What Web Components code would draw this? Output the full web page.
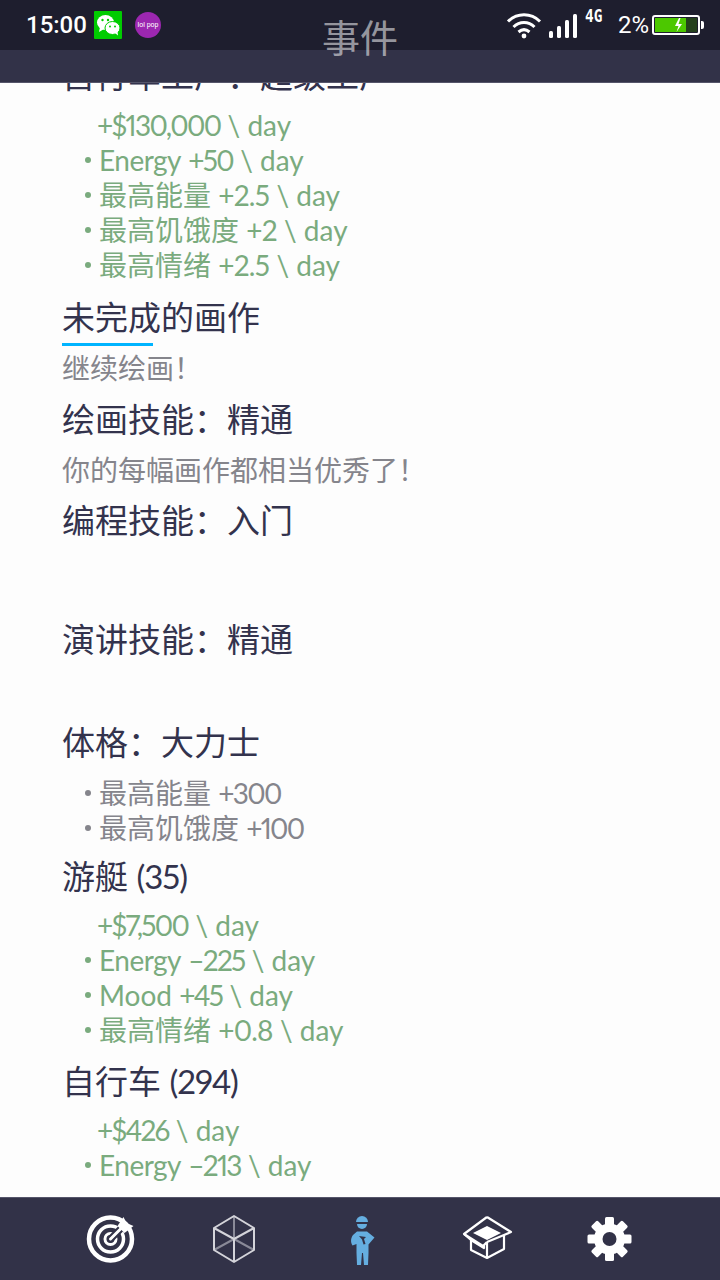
<!DOCTYPE html>
<html>
<head>
<meta charset="utf-8">
<title>事件</title>
<style>
    html, body { margin: 0; height: 100%; }
    body {
        font-family: "Lato", "Noto Sans CJK SC", sans-serif;
        background: #fdfdfd;
        overflow: hidden;
    }
    /* Lato's digits run wider than the game's font */
    .n { letter-spacing: -1.7px; }
    .d { letter-spacing: -.7px; }
    .t { letter-spacing: -1px; }
    .e { letter-spacing: -.5px; }
</style>
</head>
<body>
<game-screen>
    <status-bar></status-bar>
    <title-bar>事件</title-bar>
    <event-list>
        <ev-title style="margin-bottom: 12.5px">自行车工厂：超级工厂</ev-title>
        <ev-stats>
            <ev-stat plain><span class="n">+$130,000</span> \ day</ev-stat>
            <ev-stat><span class="e">Energy</span> <span class="n">+50</span> \ day</ev-stat>
            <ev-stat>最高能量 <span class="d">+2.5</span> \ day</ev-stat>
            <ev-stat>最高饥饿度 <span class="d">+2</span> \ day</ev-stat>
            <ev-stat>最高情绪 <span class="d">+2.5</span> \ day</ev-stat>
        </ev-stats>
        <ev-title underlined style="margin-top: 14.5px">未完成的画作</ev-title>
        <ev-note style="margin-top: 2px">继续绘画！</ev-note>
        <ev-title style="margin-top: 11px">绘画技能：精通</ev-title>
        <ev-note style="margin-top: 11px">你的每幅画作都相当优秀了！</ev-note>
        <ev-title style="margin-top: 10px">编程技能：入门</ev-title>
        <ev-title style="margin-top: 79px">演讲技能：精通</ev-title>
        <ev-title style="margin-top: 63px">体格：大力士</ev-title>
        <ev-stats muted style="margin-top: 13.5px">
            <ev-stat>最高能量 <span class="n">+300</span></ev-stat>
            <ev-stat>最高饥饿度 <span class="n">+100</span></ev-stat>
        </ev-stats>
        <ev-title style="margin-top: 10.5px">游艇 <span class="t">(35)</span></ev-title>
        <ev-stats style="margin-top: 11.5px">
            <ev-stat plain><span class="n">+$7,500</span> \ day</ev-stat>
            <ev-stat><span class="e">Energy</span> <span class="n">–225</span> \ day</ev-stat>
            <ev-stat>Mood <span class="n">+45</span> \ day</ev-stat>
            <ev-stat>最高情绪 <span class="d">+0.8</span> \ day</ev-stat>
        </ev-stats>
        <ev-title style="margin-top: 13.5px">自行车 <span class="t">(294)</span></ev-title>
        <ev-stats style="margin-top: 11.5px">
            <ev-stat plain><span class="n">+$426</span> \ day</ev-stat>
            <ev-stat><span class="e">Energy</span> <span class="n">–213</span> \ day</ev-stat>
        </ev-stats>
    </event-list>
    <nav-bar></nav-bar>
</game-screen>

<script>
class GameScreen extends HTMLElement {
    constructor() {
        super();
        this.attachShadow({ mode: 'open' });
        this.shadowRoot.innerHTML = `
            <style>
                :host {
                    display: flex;
                    flex-direction: column;
                    width: 720px;
                    height: 1280px;
                    position: relative;
                }
            </style>
            <slot></slot>
        `;
    }
}

class StatusBar extends HTMLElement {
    constructor() {
        super();
        this.attachShadow({ mode: 'open' });
        this.shadowRoot.innerHTML = `
            <style>
                :host {
                    display: flex;
                    align-items: center;
                    flex: none;
                    height: 50px;
                    background: #1e1e2e;
                    color: #fff;
                    font-family: "Roboto", sans-serif;
                    padding-left: 27px;
                    box-sizing: border-box;
                }
                .time { font-size: 24px; font-weight: 500; width: 67px; margin-left: -1px; margin-right: 1px; }
                .wechat {
                    width: 28px;
                    height: 28px;
                    background: #00cc00;
                    border-radius: 1px;
                    display: block;
                }
                .lolli {
                    width: 26px;
                    height: 26px;
                    margin-left: 13px;
                    border-radius: 50%;
                    background: #9c27b0;
                    font-size: 7px;
                    line-height: 26px;
                    text-align: center;
                    white-space: nowrap;
                }
                .right { margin-left: auto; display: flex; align-items: center; }
                .right svg { display: block; }
                .net {
                    font: bold 17px/16px "DejaVu Sans Mono", monospace;
                    width: 20px;
                    margin: -18px 0 0 7px;
                    transform: scaleX(.85);
                    transform-origin: left;
                }
                .pct { font-size: 24px; margin-left: 13px; width: 34px; }
            </style>
            <span class="time">15:00</span>
            <svg class="wechat" viewBox="0 0 28 28">
                <ellipse cx="11.5" cy="11.5" rx="8.5" ry="7.5" fill="#fff"/>
                <path d="M6 16l-1 5 5-3z" fill="#fff"/>
                <ellipse cx="18.5" cy="17" rx="7.5" ry="6.5" fill="#fff" stroke="#00cc00"/>
                <path d="M21 22l3 2.5-.5-4z" fill="#fff"/>
                <circle cx="8.5" cy="9" r="1.2" fill="#00cc00"/>
                <circle cx="14" cy="9" r="1.2" fill="#00cc00"/>
                <circle cx="16" cy="15.5" r="1" fill="#00cc00"/>
                <circle cx="21" cy="15.5" r="1" fill="#00cc00"/>
            </svg>
            <span class="lolli">lol pop</span>
            <span class="right">
                <svg width="36" height="30" viewBox="0 0 36 30" fill="none" stroke="#fff" stroke-width="3">
                    <path d="M2 11.5C11 2.5 25 2.5 34 11.5"/>
                    <path d="M7.5 17C13.5 11 22.5 11 28.5 17"/>
                    <path d="M12.5 22C16 19 20 19 23.5 22"/>
                    <circle cx="18" cy="26" r="2.4" fill="#fff" stroke="none"/>
                </svg>
                <svg width="30" height="26" viewBox="0 0 30 26" fill="#fff" style="margin: 1px 0 0 6px">
                    <rect x="1" y="18" width="4" height="7" rx="1.5"/>
                    <rect x="9" y="13" width="4" height="12" rx="1.5"/>
                    <rect x="17" y="7" width="4" height="18" rx="1.5"/>
                    <rect x="25" y="1" width="4" height="24" rx="1.5"/>
                </svg>
                <span class="net">4G</span>
                <span class="pct">2%</span>
                <svg width="53" height="22" viewBox="0 0 53 22" style="margin-right: 15px">
                    <rect x="1" y="2" width="46" height="18" rx="2" fill="none" stroke="#fff" stroke-width="2"/>
                    <rect x="3" y="4" width="31" height="14" fill="#4cc800"/>
                    <rect x="34" y="4" width="11" height="14" fill="#24401c"/>
                    <path d="M27 4l-4 8h3.500l-2 6 5.500-8h-3.500l2-6z" fill="#fff"/>
                    <path d="M49 7h1a2 2 0 0 1 2 2v4a2 2 0 0 1-2 2h-1z" fill="#fff"/>
                </svg>
            </span>
        `;
    }
}

class TitleBar extends HTMLElement {
    constructor() {
        super();
        this.attachShadow({ mode: 'open' });
        this.shadowRoot.innerHTML = `
            <style>
                :host {
                    display: block;
                    flex: none;
                    height: 33px;
                    background: #323248;
                    border-bottom: 1px solid #55556a;
                    box-sizing: border-box;
                    position: relative;
                    z-index: 2;
                }
                .label {
                    position: absolute;
                    left: 0;
                    right: 0;
                    top: -40px;
                    height: 52px;
                    line-height: 52px;
                    text-align: center;
                    font-family: "Noto Sans CJK SC", sans-serif;
                    font-size: 38px;
                    color: rgba(255, 255, 255, .55);
                }
            </style>
            <div class="label"><slot></slot></div>
        `;
    }
}

class EventList extends HTMLElement {
    constructor() {
        super();
        this.attachShadow({ mode: 'open' });
        this.shadowRoot.innerHTML = `
            <style>
                :host {
                    display: block;
                    flex: 1;
                    min-height: 0;
                    overflow: hidden;
                    background: #fdfdfd;
                }
                /* scrolled part way down the list */
                .inner { margin-top: -28px; padding-left: 62px; }
            </style>
            <div class="inner"><slot></slot></div>
        `;
    }
}

class EvTitle extends HTMLElement {
    constructor() {
        super();
        this.attachShadow({ mode: 'open' });
        this.shadowRoot.innerHTML = `
            <style>
                :host {
                    display: block;
                    font-size: 33px;
                    line-height: 40px;
                    color: #33334d;
                    font-variant-numeric: proportional-nums;
                    white-space: nowrap;
                }
                .bar { display: none; width: 91px; height: 3px; background: #00b4ff; margin-top: 6px; }
                :host([underlined]) .bar { display: block; }
            </style>
            <slot></slot>
            <div class="bar"></div>
        `;
    }
}

class EvNote extends HTMLElement {
    constructor() {
        super();
        this.attachShadow({ mode: 'open' });
        this.shadowRoot.innerHTML = `
            <style>
                :host {
                    display: block;
                    font-size: 28px;
                    line-height: 40px;
                    color: #85858c;
                    white-space: nowrap;
                }
            </style>
            <slot></slot>
        `;
    }
}

class EvStats extends HTMLElement {
    constructor() {
        super();
        this.attachShadow({ mode: 'open' });
        this.shadowRoot.innerHTML = `
            <style>
                :host { display: block; color: #7aab7e; }
                :host([muted]) { color: #85858c; }
            </style>
            <slot></slot>
        `;
    }
}

class EvStat extends HTMLElement {
    constructor() {
        super();
        this.attachShadow({ mode: 'open' });
        this.shadowRoot.innerHTML = `
            <style>
                :host {
                    display: flex;
                    align-items: center;
                    height: 35px;
                    font-size: 28px;
                    line-height: 35px;
                    font-variant-numeric: proportional-nums;
                    white-space: pre;
                    padding-left: 23px;
                }
                .dot {
                    width: 6px;
                    height: 6px;
                    border-radius: 50%;
                    background: currentColor;
                    margin-right: 8px;
                    flex: none;
                }
                :host([plain]) { padding-left: 35px; }
                :host([plain]) .dot { display: none; }
            </style>
            <span class="dot"></span><span><slot></slot></span>
        `;
    }
}

class NavBar extends HTMLElement {
    constructor() {
        super();
        this.attachShadow({ mode: 'open' });
        const teeth = [0, 45, 90, 135, 180, 225, 270, 315]
            .map(a => `<rect x="25.5" y="8" width="9" height="10" rx="1.5" transform="rotate(${a} 30 30)"/>`)
            .join('');
        this.shadowRoot.innerHTML = `
            <style>
                :host {
                    display: grid;
                    grid-template-columns: repeat(5, 125px);
                    justify-items: center;
                    align-items: center;
                    flex: none;
                    height: 83px;
                    padding-left: 48px;
                    box-sizing: border-box;
                    background: #323248;
                    border-top: 1px solid #55556a;
                }
                svg { display: block; }
            </style>
            <svg width="60" height="60" viewBox="0.5 0 60 60" fill="none" stroke="#fff" stroke-linecap="round">
                <circle cx="30" cy="30" r="21.500" stroke-width="4.500"/>
                <circle cx="30" cy="30" r="13" stroke-width="3.500"/>
                <circle cx="30" cy="30" r="5.500" stroke-width="3"/>
                <path d="M30 30L43 17" stroke="#323248" stroke-width="7"/>
                <path d="M30 30L43 17" stroke-width="3"/>
                <path d="M43 8l3 6 7 3-9 7-7-7z" fill="#fff" stroke="none"/>
            </svg>
            <svg width="60" height="60" viewBox="2 0 60 60" fill="none" stroke-width="2">
                <path d="M30 30V7M30 30L10 41M30 30L50 41" stroke="#8a8a98"/>
                <path d="M30 30V53M30 30L10 19M30 30L50 19" stroke="#d4d4da"/>
                <path d="M30 7L50 19V41L30 53L10 41V19z" stroke="#d4d4da" stroke-linejoin="round"/>
            </svg>
            <svg width="60" height="60" viewBox="0 0 60 60" fill="#65aee0">
                <path d="M25 13a6 6 0 0 1 12 0z"/>
                <path d="M26 15h10a5 5 0 0 1-10 0z"/>
                <path d="M26 22.500h10l7.500 6-6 7V44l-.5 12h-4l-1-12h-1l-1 12h-4l-.5-12V35l-4 1.500c-2-3-2-7 .5-10.500z"/>
                <path d="M28 27l7 1-2 2 1.500 5-2 .5-1.500-5z" fill="#323248"/>
            </svg>
            <svg width="60" height="60" viewBox="0 0 60 60" fill="none" stroke="#fff" stroke-width="2.200" stroke-linejoin="round">
                <path d="M31 8L8 25l7 6v10l16 8 17-9V26"/>
                <path d="M31 8L55 23l-7 3-17 7"/>
                <path d="M8 25l19 12 4-4"/>
                <path d="M31 33v16M15 31l13 8v-3"/>
                <path d="M31 17l14 7-14 7-14-7z" fill="#fff" stroke="none"/>
            </svg>
            <svg width="60" height="60" viewBox="1.500 0 60 60" fill="#fff">
                ${teeth}
                <circle cx="30" cy="30" r="15.500"/>
                <circle cx="30" cy="30" r="7" fill="#323248"/>
            </svg>
        `;
    }
}

customElements.define('game-screen', GameScreen);
customElements.define('status-bar', StatusBar);
customElements.define('title-bar', TitleBar);
customElements.define('event-list', EventList);
customElements.define('ev-title', EvTitle);
customElements.define('ev-note', EvNote);
customElements.define('ev-stats', EvStats);
customElements.define('ev-stat', EvStat);
customElements.define('nav-bar', NavBar);
</script>
</body>
</html>
